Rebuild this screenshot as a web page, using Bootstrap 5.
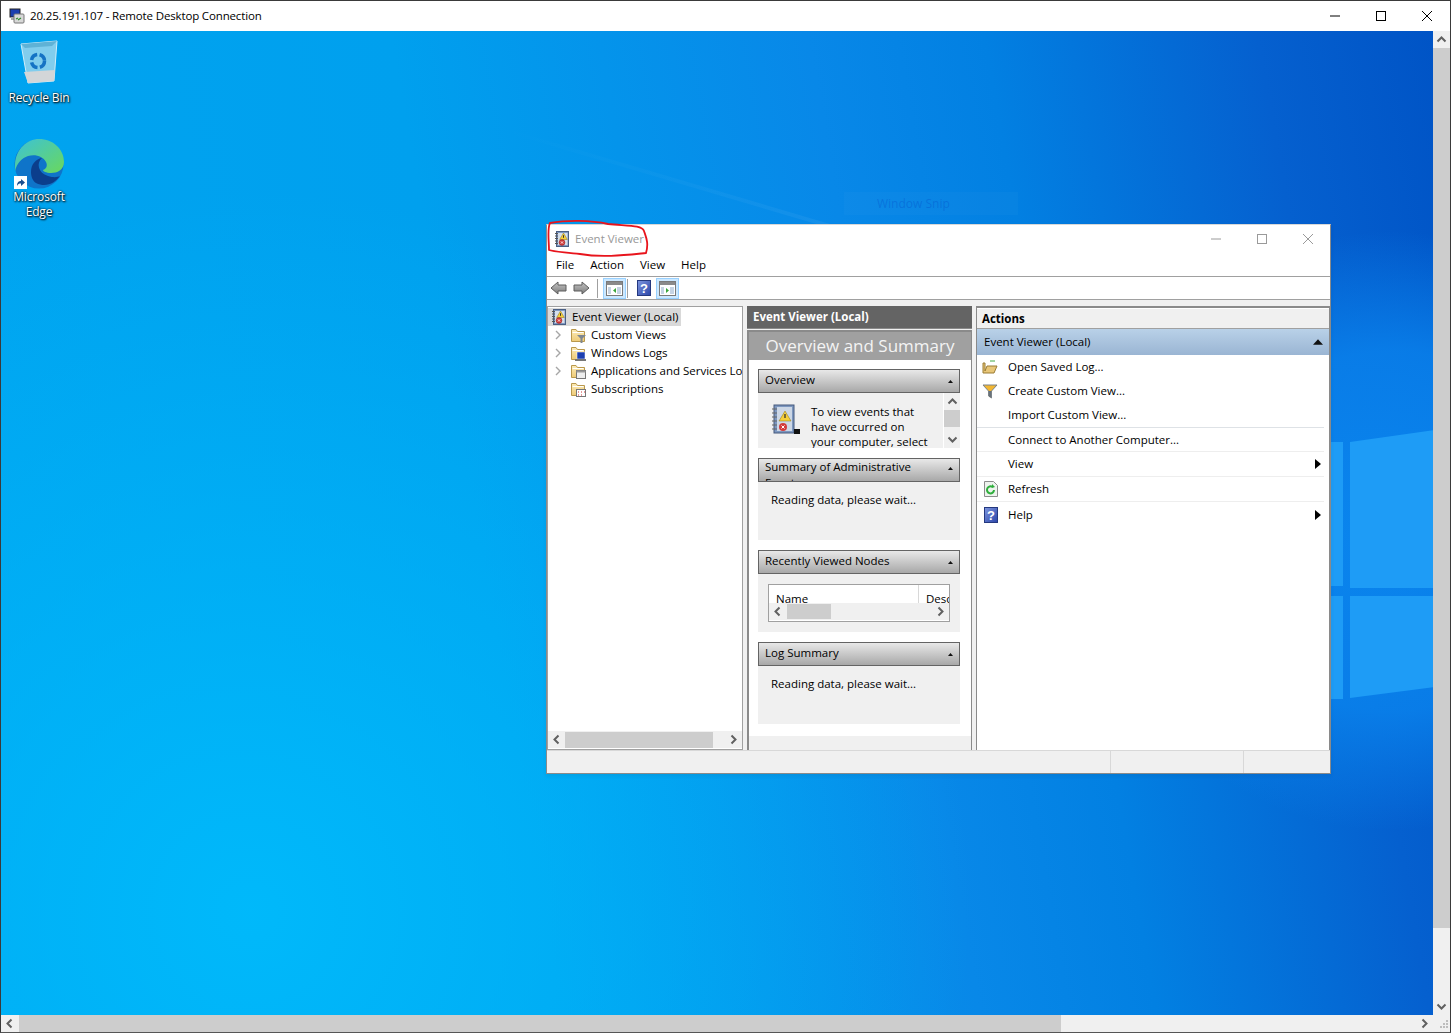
<!doctype html>
<html lang="en">
<head>
  <meta charset="utf-8" />
  <title>20.25.191.107 - Remote Desktop Connection</title>
  <link href="https://cdn.jsdelivr.net/npm/bootstrap@5.3.0/dist/css/bootstrap.min.css" rel="stylesheet" />
  <style>
    body { width: 1451px; height: 1033px; overflow: hidden; background: #f0f0f0; font-family: "Open Sans", "Noto Sans", sans-serif; font-size: 11.5px; color: #000; border: 1px solid #3a3a3a; border-bottom-color: #555; }
    .rdp-title { height: 30px; background: #fff; }
    .rdp-title .ttl { letter-spacing: -.15px; margin-left: 5px; }
    .rdp-btn { width: 46px; height: 30px; }
    .desktop { width: 1433px; background: linear-gradient(80deg, #00a5f0 0%, #00a0ee 35%, #0888e8 61%, #0280e2 72%, #0560cf 89%, #0054c6 100%); }
    .wallpaper { inset: 0; }
    .vscroll { width: 17px; }
    .thumb-v { height: 880px; background: #cdcdcd; }
    .hscroll { height: 17px; }
    .thumb-h { width: 1042px; background: #cdcdcd; margin-left: 1px; }
    .sb-arrow { width: 17px; height: 17px; flex-shrink: 0; }
    .desk-icon { width: 76px; color: #fff; text-shadow: 0 0 2px #000, 1px 1px 2px #000; line-height: 15px; left: 0; font-size: 12px; letter-spacing: -.15px; }
    .desk-bin { top: 8px; }
    .desk-bin-label { margin-top: 5px; }
    .desk-edge { top: 108px; }
    .edge-logo { width: 50px; height: 50px; }
    .snip-ghost { left: 843px; top: 161px; width: 174px; height: 23px; padding-left: 33px; background: rgba(255,255,255,.025); color: rgba(0,60,190,.28); font-size: 12px; }

    .ev-window { left: 545px; top: 193px; width: 785px; height: 550px; background: #fff; border: 1px solid #8a8a8a; border-top-color: #d8d8d8; }
    .ev-title { height: 29px; color: #999; padding: 0 0 2px 7px; }
    .ev-title-text { margin-left: 5px; }
    .ev-btn { width: 46px; height: 27px; }
    .ev-btn:last-child { margin-right: -1px; }
    .ev-menu { height: 23px; padding-left: 1px; border-bottom: 1px solid #a0a0a0; }
    .ev-menu span { padding: 0 8px; }
    .ev-tools { height: 23px; padding: 0 3px; border-bottom: 1px solid #a0a0a0; }
    .tool-on { width: 23px; height: 21px; background: #cce8ff; border: 1px solid #99d1ff; }
    .tool-sep { width: 1px; height: 19px; background: #a0a0a0; }
    .sep-a { margin: 0 5px 0 7px; }
    .sep-b { margin: 0 9px 0 1px; }
    .tool-last { margin-left: 5px; }
    .ev-main { min-height: 0; background: #f0f0f0; padding-top: 6px; }

    .tree-pane { width: 196px; margin-right: 4px; border: 1px solid #a0a0a0; background: #fff; }
    .tree-list { padding-top: 1px; }
    .tree-row { height: 18px; white-space: nowrap; overflow: hidden; }
    .tree-root { background: #d9d9d9; width: 133px; padding-left: 3px; }
    .tree-root span { margin-left: 5px; }
    .tree-child { padding-left: 5px; }
    .tree-chev { width: 16px; flex-shrink: 0; }
    .tree-ico { flex-shrink: 0; margin-left: 1px; }
    .tree-child span:last-child { margin-left: 5px; }
    .tree-pane .thumb { width: 148px; height: 16px; background: #cdcdcd; }
    .tree-scroll { height: 17px; background: #f0f0f0; margin-bottom: 1px; }

    .mid-pane { width: 225px; margin-right: 4px; }
    .mid-head { height: 23px; background: #646464; color: #fff; font-weight: 700; padding-left: 6px; border-bottom: 1px solid #8a8a8a; }
    .mid-box { border: solid #8a8a8a; border-width: 2px 1px 0 2px; margin-top: 1px; }
    .mid-band { height: 28px; background: #a0a0a0; color: #f4f4f4; font-size: 17px; }
    .mid-scroll { background: #fff; padding: 9px 11px 12px 9px; }
    .sect { margin-bottom: 10px; }
    .sect:last-child { margin-bottom: 0; }
    .sect-head { height: 24px; border: 1px solid #646464; background: linear-gradient(#e8e8e8, #a8a8a8); padding: 2px 6px 0; overflow: hidden; line-height: 16px; }
    .sect-wrap { padding-top: 0; }
    .sect-head .txt { width: 172px; }
    .sect-body { background: #f0f0f0; height: 58px; padding: 9px 13px; }
    .sect-short { height: 55px; padding: 0; overflow: hidden; }
    .ov-icon { flex-shrink: 0; margin: 10px 0 0 13px; }
    .ov-text { width: 118px; line-height: 15px; padding-top: 11px; margin-left: 8px; flex-shrink: 0; }
    .ov-scroll { width: 17px; height: 55px; background: #f0f0f0; border-left: 1px solid #fff; }
    .ov-thumb { height: 17px; background: #cdcdcd; }
    .grid-box { height: 38px; width: 182px; border: 1px solid #a0a0a0; background: #fff; overflow: hidden; margin: 0 0 0 -3px; }
    .grid-head { height: 18px; padding-left: 7px; overflow: hidden; line-height: 27px; }
    .grid-head .col-name { width: 143px; flex-shrink: 0; border-right: 1px solid #d8d8d8; }
    .grid-head .col-desc { padding-left: 7px; }
    .grid-scroll { height: 17px; background: #f0f0f0; }
    .grid-thumb { width: 44px; height: 15px; background: #cdcdcd; margin-left: 1px; }
    .sect-grid { padding-top: 10px; }
    .mid-foot { flex: 1; background: #f0f0f0; }

    .act-pane { width: 355px; background: #fff; border: solid #8a8a8a; border-width: 2px 1px 0 1px; }
    .act-head { height: 21px; background: #f0f0f0; font-weight: 700; padding-left: 5px; border-bottom: 1px solid #a0a0a0; border-top: 1px solid #fff; }
    .act-sub { height: 26px; background: linear-gradient(#b9d1e8, #9ab5d3); padding: 0 6px 0 7px; }
    .act-item { height: 24px; padding: 0 7px 0 5px; }
    .act-sep { height: 25px; margin-right: 5px; padding-left: 5px; border-bottom: 1px solid #eee; }
    .act-ico { width: 26px; flex-shrink: 0; }
    .act-glyph { margin-left: 2px; }
    .act-tri { margin: 0 3px 0 4px; }
    .ev-status { height: 23px; background: #f0f0f0; border-top: 1px solid #d8d8d8; }
    .st-a { width: 564px; border-right: 1px solid #d8d8d8; }
    .st-b { width: 133px; border-right: 1px solid #d8d8d8; }
    .annot { left: 545px; top: 186px; pointer-events: none; }
  </style>
</head>
<body class="d-flex flex-column">
  <svg width="0" height="0" class="position-absolute">
    <defs>
      <linearGradient id="g-blue" x1="0" y1="0" x2="1" y2="1"><stop offset="0" stop-color="#7f97df"/><stop offset="1" stop-color="#2a44a8"/></linearGradient>
      <linearGradient id="g-arrow" x1="0" y1="0" x2="0" y2="1"><stop offset="0" stop-color="#c4c4c4"/><stop offset="1" stop-color="#7c7c7c"/></linearGradient>
      <linearGradient id="g-folder" x1="0" y1="0" x2="0" y2="1"><stop offset="0" stop-color="#fbeab6"/><stop offset="1" stop-color="#eecb78"/></linearGradient>
      <symbol id="i-ev" viewBox="0 0 16 16">
        <rect x="2.5" y=".5" width="12" height="15" fill="#7f99c2" stroke="#4a5f84"/>
        <rect x="4" y="2" width="9.5" height="12" fill="#d6dfeb"/>
        <path d="M1 2.5h3M1 5h3M1 7.5h3M1 10h3M1 12.5h3" stroke="#555"/>
        <path d="M9.5 2l3.8 6.5H5.7z" fill="#f5cf3a" stroke="#8f7410" stroke-width=".5"/>
        <path d="M9.5 4.2v2.6" stroke="#333"/>
        <circle cx="8" cy="11.5" r="2.9" fill="#d33b3b" stroke="#8b1c1c" stroke-width=".5"/>
        <path d="M6.9 10.4l2.2 2.2m0-2.2l-2.2 2.2" stroke="#fff" stroke-width=".8"/>
      </symbol>
      <symbol id="i-folder" viewBox="0 0 16 16">
        <path d="M1.5 2.5v12h13v-10H7.5l-1.5-2z" fill="url(#g-folder)" stroke="#b9984c"/>
        <path d="M2.5 5.5h11" stroke="#fff"/>
      </symbol>
      <symbol id="i-pane" viewBox="0 0 17 15">
        <rect x=".5" y=".5" width="16" height="14" fill="#fff" stroke="#7a7a7a"/>
        <rect x="1" y="1" width="15" height="3" fill="#8a8a8a"/>
        <rect x="2" y="6" width="3" height="7" fill="#c6d4e4"/>
        <rect x="11" y="6" width="4" height="7" fill="#c6d4e4"/>
      </symbol>
      <symbol id="i-help" viewBox="0 0 14 16">
        <rect x=".5" y=".5" width="13" height="15" fill="url(#g-blue)" stroke="#24387f"/>
        <text x="7" y="13" text-anchor="middle" font-family="Liberation Sans" font-weight="700" font-size="13" fill="#fff">?</text>
      </symbol>
      <symbol id="i-chev-l" viewBox="0 0 17 17"><path d="M10.5 4.5L6.5 8.5l4 4" fill="none" stroke="#606060" stroke-width="2"/></symbol>
      <symbol id="i-chev-r" viewBox="0 0 17 17"><path d="M6.5 4.5l4 4-4 4" fill="none" stroke="#606060" stroke-width="2"/></symbol>
      <symbol id="i-chev-u" viewBox="0 0 17 17"><path d="M4.5 10.5l4-4 4 4" fill="none" stroke="#606060" stroke-width="2"/></symbol>
      <symbol id="i-chev-d" viewBox="0 0 17 17"><path d="M4.5 6.5l4 4 4-4" fill="none" stroke="#606060" stroke-width="2"/></symbol>
      <symbol id="i-tree" viewBox="0 0 10 10"><path d="M3 1l4 4-4 4" fill="none" stroke="#a6a6a6" stroke-width="1.4"/></symbol>
      <symbol id="i-tri-up" viewBox="0 0 7 4"><path d="M0 4l3.5-4 3.5 4z" fill="#111"/></symbol>
      <symbol id="i-tri-right" viewBox="0 0 6 10"><path d="M0 0l6 5-6 5z" fill="#000"/></symbol>
    </defs>
  </svg>

  <header class="rdp-title d-flex align-items-center flex-shrink-0">
    <svg class="ms-2" width="16" height="16" viewBox="0 0 16 16">
      <rect x="1" y="1" width="10" height="8" fill="#1c3fb0" stroke="#222"/>
      <rect x="2" y="9" width="8" height="3" fill="#aaa"/>
      <rect x="5" y="6" width="10" height="9" rx="1" fill="#d8d8d8" stroke="#777"/>
      <path d="M7 11l2-1m0 2l3-2" stroke="#2e8b2e" stroke-width="1.2"/>
    </svg>
    <span class="ttl flex-grow-1">20.25.191.107 - Remote Desktop Connection</span>
    <div class="rdp-btn d-flex align-items-center justify-content-center"><svg width="10" height="10"><path d="M0 5h10" stroke="#000"/></svg></div>
    <div class="rdp-btn d-flex align-items-center justify-content-center"><svg width="10" height="10"><rect x=".5" y=".5" width="9" height="9" fill="none" stroke="#000"/></svg></div>
    <div class="rdp-btn d-flex align-items-center justify-content-center"><svg width="10" height="10"><path d="M0 0l10 10M10 0L0 10" stroke="#000"/></svg></div>
  </header>

  <div class="d-flex flex-grow-1">
    <main class="desktop position-relative overflow-hidden">
      <svg class="wallpaper position-absolute" width="1433" height="985" viewBox="0 0 1433 985">
        <defs>
          <radialGradient id="glow-left" gradientUnits="userSpaceOnUse" cx="250" cy="880" r="720">
            <stop offset="0" stop-color="#00baFb" stop-opacity=".95"/>
            <stop offset="1" stop-color="#00baFb" stop-opacity="0"/>
          </radialGradient>
          <radialGradient id="glow-right" gradientUnits="userSpaceOnUse" cx="1390" cy="500" r="300">
            <stop offset="0" stop-color="#0a88f0" stop-opacity=".95"/>
            <stop offset=".6" stop-color="#0a84ee" stop-opacity=".8"/>
            <stop offset="1" stop-color="#0a84ee" stop-opacity="0"/>
          </radialGradient>
          <linearGradient id="beam" gradientUnits="userSpaceOnUse" x1="500" y1="0" x2="900" y2="0">
            <stop offset="0" stop-color="#fff" stop-opacity="0"/>
            <stop offset=".8" stop-color="#fff" stop-opacity=".05"/>
            <stop offset="1" stop-color="#fff" stop-opacity=".14"/>
          </linearGradient>
        </defs>
        <rect width="1433" height="985" fill="url(#glow-left)"/>
        <rect x="1000" y="180" width="433" height="640" fill="url(#glow-right)"/>
        <path d="M500 96L900 214l-3 3L500 100z" fill="url(#beam)"/>
        <path d="M1349 411l84-12v158h-84zM1349 565h84v91l-84 11zM1330 411h12v144h-12zM1330 565h12v103h-12z" fill="#1e9cf6"/>
      </svg>
      <div class="snip-ghost position-absolute d-flex align-items-center">Window Snip</div>

      <div class="desk-icon position-absolute desk-bin text-center">
        <svg width="42" height="46" viewBox="0 0 42 46">
          <path d="M3 5l36-3-3 40-26 2z" fill="#8fd2ec" fill-opacity=".9" stroke="#cfeefa"/>
          <path d="M3 5l36-3-5 5-27 2z" fill="#5fb2d6"/>
          <path d="M6 33l31-2-1 11-26 2z" fill="#d3d6d8"/>
          <circle cx="20" cy="22" r="6.5" fill="none" stroke="#1573c4" stroke-width="3.5" stroke-dasharray="8 2.5"/>
        </svg>
        <div class="desk-bin-label">Recycle Bin</div>
      </div>
      <div class="desk-icon position-absolute desk-edge text-center">
        <div class="edge-logo position-relative d-inline-block">
          <svg width="50" height="50" viewBox="0 0 50 50">
            <defs><linearGradient id="edg" x1="0" y1="0" x2="1" y2="1"><stop offset="0" stop-color="#3cc2d8"/><stop offset="1" stop-color="#6ad85c"/></linearGradient></defs>
            <circle cx="25" cy="25" r="24.5" fill="#0f74c9"/>
            <path d="M1 25C2 10 13 0 25 0c14 0 25 10 25 23 0 8-7 11-13 11-5 0-8-2-8-3 3-1 5-4 3-8-3-6-11-8-18-6C8 19 3 24 1 32z" fill="url(#edg)"/>
            <path d="M17 33c0-8 5-13 11-14-6 5-4 15 6 18 6 2 10 1 12 0-5 7-14 12-24 7-3-2-5-6-5-11z" fill="#0b3e8c"/>
          </svg>
          <svg class="position-absolute bottom-0 start-0" width="13" height="13" viewBox="0 0 13 13"><rect width="13" height="13" fill="#fff"/><path d="M3 10c0-4 2-5 4-5V3l4 3.5L7 10V7.5C5 7.5 4 8 3 10z" fill="#1c4f8f"/></svg>
        </div>
        <div>Microsoft<br />Edge</div>
      </div>

      <section class="ev-window position-absolute d-flex flex-column shadow-sm">
        <div class="ev-title d-flex align-items-center flex-shrink-0">
          <svg width="16" height="16"><use href="#i-ev"/></svg>
          <span class="ev-title-text flex-grow-1">Event Viewer</span>
          <div class="ev-btn d-flex align-items-center justify-content-center"><svg width="10" height="10"><path d="M0 5h10" stroke="#9a9a9a"/></svg></div>
          <div class="ev-btn d-flex align-items-center justify-content-center"><svg width="10" height="10"><rect x=".5" y=".5" width="9" height="9" fill="none" stroke="#9a9a9a"/></svg></div>
          <div class="ev-btn d-flex align-items-center justify-content-center"><svg width="10" height="10"><path d="M0 0l10 10M10 0L0 10" stroke="#9a9a9a"/></svg></div>
        </div>
        <nav class="ev-menu d-flex align-items-center flex-shrink-0"><span>File</span><span>Action</span><span>View</span><span>Help</span></nav>
        <div class="ev-tools d-flex align-items-center flex-shrink-0">
          <svg width="18" height="16" viewBox="0 0 18 16"><path d="M8 2L1 8l7 6v-3h8V5H8z" fill="url(#g-arrow)" stroke="#5c5c5c"/></svg>
          <svg width="18" height="16" viewBox="0 0 18 16" class="ms-1"><path d="M10 2l7 6-7 6v-3H2V5h8z" fill="url(#g-arrow)" stroke="#5c5c5c"/></svg>
          <div class="tool-sep sep-a"></div>
          <div class="tool-on d-flex align-items-center justify-content-center"><svg width="17" height="15"><use href="#i-pane"/><path d="M10 7v5L7 9.5z" fill="#3aa53a"/></svg></div>
          <div class="tool-sep sep-b"></div>
          <svg width="14" height="16"><use href="#i-help"/></svg>
          <div class="tool-on tool-last d-flex align-items-center justify-content-center"><svg width="17" height="15"><use href="#i-pane"/><path d="M7 7v5l3-2.5z" fill="#3aa53a"/></svg></div>
        </div>

        <div class="ev-main d-flex flex-grow-1">
          <aside class="tree-pane d-flex flex-column">
            <div class="tree-list flex-grow-1 overflow-hidden">
              <div class="tree-row tree-root d-flex align-items-center"><svg width="16" height="16"><use href="#i-ev"/></svg><span>Event Viewer (Local)</span></div>
              <div class="tree-row tree-child d-flex align-items-center"><svg class="tree-chev" width="16" height="10"><use href="#i-tree" width="10" height="10"/></svg><svg width="16" height="16" class="tree-ico"><use href="#i-folder"/><path d="M7 8h9l-3.5 3.5V16h-2v-4.5z" fill="#7f8791"/></svg><span>Custom Views</span></div>
              <div class="tree-row tree-child d-flex align-items-center"><svg class="tree-chev" width="16" height="10"><use href="#i-tree" width="10" height="10"/></svg><svg width="16" height="16" class="tree-ico"><use href="#i-folder"/><rect x="7" y="7" width="8" height="7" fill="#1c3fb0" stroke="#fff" stroke-width=".5"/><rect x="5" y="14" width="11" height="2" fill="#777"/></svg><span>Windows Logs</span></div>
              <div class="tree-row tree-child d-flex align-items-center"><svg class="tree-chev" width="16" height="10"><use href="#i-tree" width="10" height="10"/></svg><svg width="16" height="16" class="tree-ico"><use href="#i-folder"/><rect x="6.5" y="7.5" width="9" height="8" fill="#eee" stroke="#777"/><rect x="6.5" y="7.5" width="9" height="2" fill="#999"/></svg><span>Applications and Services Lo</span></div>
              <div class="tree-row tree-child d-flex align-items-center"><span class="tree-chev"></span><svg width="16" height="16" class="tree-ico"><use href="#i-folder"/><rect x="6.5" y="8.5" width="9" height="7" fill="#fff" stroke="#777"/><path d="M8 11h1M11 11h1M14 11h1M8 14h1M11 14h1" stroke="#c33"/></svg><span>Subscriptions</span></div>
            </div>
            <div class="tree-scroll d-flex align-items-center">
              <svg class="sb-arrow"><use href="#i-chev-l"/></svg>
              <div class="thumb"></div>
              <span class="flex-grow-1"></span>
              <svg class="sb-arrow"><use href="#i-chev-r"/></svg>
            </div>
          </aside>

          <div class="mid-pane d-flex flex-column">
            <div class="mid-head d-flex align-items-center flex-shrink-0">Event Viewer (Local)</div>
            <div class="mid-box d-flex flex-column flex-grow-1">
              <div class="mid-band d-flex align-items-center justify-content-center flex-shrink-0">Overview and Summary</div>
              <div class="mid-scroll">
                <div class="sect">
                  <div class="sect-head d-flex justify-content-between"><span class="txt">Overview</span><svg width="5" height="3" class="mt-2"><use href="#i-tri-up"/></svg></div>
                  <div class="sect-body sect-short d-flex">
                    <svg width="32" height="34" viewBox="0 0 32 34" class="ov-icon">
                      <rect x="3" y="2" width="20" height="28" fill="#7d97bf" stroke="#44597c"/>
                      <rect x="6" y="4" width="15" height="24" fill="#ccd7e6"/>
                      <path d="M1 6h5M1 10h5M1 14h5M1 18h5M1 22h5M1 26h5" stroke="#666"/>
                      <path d="M14 8l6 10H8z" fill="#f5cf3a" stroke="#8f7410" stroke-width=".5"/>
                      <path d="M14 11v4" stroke="#333" stroke-width="1.3"/>
                      <circle cx="12" cy="24" r="4" fill="#d33b3b"/>
                      <path d="M10.5 22.5l3 3m0-3l-3 3" stroke="#fff"/>
                      <path d="M23 26h6v5h-6z" fill="#111"/>
                    </svg>
                    <div class="ov-text">To view events that have occurred on your computer, select</div>
                    <div class="ov-scroll d-flex flex-column flex-shrink-0 ms-auto">
                      <svg class="sb-arrow"><use href="#i-chev-u"/></svg>
                      <div class="ov-thumb"></div>
                      <svg class="sb-arrow mt-auto"><use href="#i-chev-d"/></svg>
                    </div>
                  </div>
                </div>
                <div class="sect">
                  <div class="sect-head sect-wrap d-flex justify-content-between"><span class="txt">Summary of Administrative Events</span><svg width="5" height="3" class="mt-2"><use href="#i-tri-up"/></svg></div>
                  <div class="sect-body">Reading data, please wait...</div>
                </div>
                <div class="sect">
                  <div class="sect-head d-flex justify-content-between"><span class="txt">Recently Viewed Nodes</span><svg width="5" height="3" class="mt-2"><use href="#i-tri-up"/></svg></div>
                  <div class="sect-body sect-grid">
                    <div class="grid-box">
                      <div class="grid-head d-flex"><span class="col-name">Name</span><span class="col-desc">Desc</span></div>
                      <div class="grid-scroll d-flex align-items-center">
                        <svg class="sb-arrow"><use href="#i-chev-l"/></svg>
                        <div class="grid-thumb"></div>
                        <span class="flex-grow-1"></span>
                        <svg class="sb-arrow"><use href="#i-chev-r"/></svg>
                      </div>
                    </div>
                  </div>
                </div>
                <div class="sect">
                  <div class="sect-head d-flex justify-content-between"><span class="txt">Log Summary</span><svg width="5" height="3" class="mt-2"><use href="#i-tri-up"/></svg></div>
                  <div class="sect-body">Reading data, please wait...</div>
                </div>
              </div>
              <div class="mid-foot"></div>
            </div>
          </div>

          <aside class="act-pane d-flex flex-column">
            <div class="act-head d-flex align-items-center flex-shrink-0">Actions</div>
            <div class="act-sub d-flex align-items-center justify-content-between flex-shrink-0"><span>Event Viewer (Local)</span><svg width="10" height="6"><use href="#i-tri-up"/></svg></div>
            <div>
              <div class="act-item d-flex align-items-center"><span class="act-ico d-flex"><svg width="16" height="14" viewBox="0 0 16 14"><path d="M1 3v10h11l3-7H5L3 11V3z" fill="#e8c678" stroke="#9b7c35"/><path d="M8 1h5" stroke="#4a4"/></svg></span>Open Saved Log...</div>
              <div class="act-item d-flex align-items-center"><span class="act-ico d-flex"><svg width="16" height="16" viewBox="0 0 16 16"><path d="M1 2h14L9.5 8v7l-3-2V8z" fill="#f2b632" stroke="#7a8288"/><path d="M7 8h2v6H7z" fill="#68727a"/></svg></span>Create Custom View...</div>
              <div class="act-item d-flex align-items-center"><span class="act-ico"></span>Import Custom View...</div>
              <div class="act-sep d-flex align-items-center border-top"><span class="act-ico"></span>Connect to Another Computer...</div>
              <div class="act-sep d-flex align-items-center"><span class="act-ico"></span><span class="flex-grow-1">View</span><svg width="6" height="10" class="act-tri"><use href="#i-tri-right"/></svg></div>
              <div class="act-sep d-flex align-items-center"><span class="act-ico d-flex"><svg width="14" height="16" viewBox="0 0 14 16" class="act-glyph"><path d="M.5.5h9l4 4v11H.5z" fill="#eef3ee" stroke="#8c8c8c"/><path d="M10 9a3.5 3.5 0 1 1-1.5-3" fill="none" stroke="#2fae3c" stroke-width="2"/><path d="M8 3l3 3-3 1z" fill="#2fae3c"/></svg></span><span>Refresh</span></div>
              <div class="act-sep d-flex align-items-center border-0"><span class="act-ico d-flex"><svg width="14" height="16" class="act-glyph"><use href="#i-help"/></svg></span><span class="flex-grow-1">Help</span><svg width="6" height="10" class="act-tri"><use href="#i-tri-right"/></svg></div>
            </div>
          </aside>
        </div>

        <footer class="ev-status d-flex flex-shrink-0">
          <div class="st-a"></div><div class="st-b"></div><div class="flex-grow-1"></div>
        </footer>
      </section>

      <svg class="annot position-absolute" width="110" height="42" viewBox="0 0 110 42"><path d="M4 6C20 3 45 3 62 7 82 9 96 8 98 14c2 6 5 12 2 22-20 2-44 5-66 1C20 35 8 35 3 33 3 24 1 12 4 6z" fill="none" stroke="#e8141c" stroke-width="1.8"/></svg>
    </main>
    <aside class="vscroll d-flex flex-column">
      <svg class="sb-arrow"><use href="#i-chev-u"/></svg>
      <div class="thumb-v"></div>
      <span class="flex-grow-1"></span>
      <svg class="sb-arrow"><use href="#i-chev-d"/></svg>
    </aside>
  </div>
  <div class="hscroll d-flex flex-shrink-0">
    <svg class="sb-arrow"><use href="#i-chev-l"/></svg>
    <div class="thumb-h"></div>
    <span class="flex-grow-1"></span>
    <svg class="sb-arrow"><use href="#i-chev-r"/></svg>
    <svg width="17" height="17" viewBox="0 0 17 17"><path d="M13 5h2v2h-2zM10 8h2v2h-2zM13 8h2v2h-2zM7 11h2v2H7zM10 11h2v2h-2zM13 11h2v2h-2z" fill="#bdbdbd"/></svg>
  </div>
  <script src="https://cdn.jsdelivr.net/npm/bootstrap@5.3.0/dist/js/bootstrap.bundle.min.js"></script>
</body>
</html>
